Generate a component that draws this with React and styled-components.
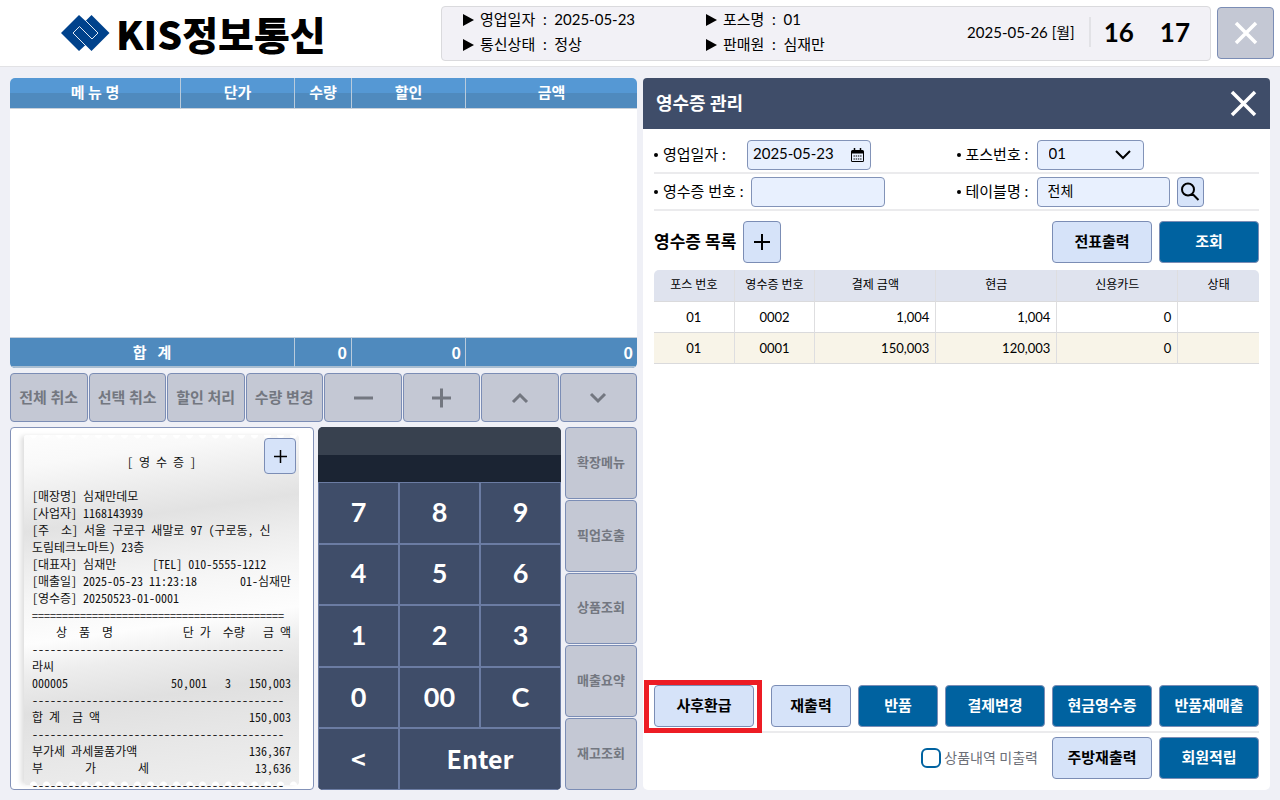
import React, { useState } from 'react';
import styled, { css, createGlobalStyle } from 'styled-components';

const GlobalStyle = createGlobalStyle`
  * {
    box-sizing: border-box;
  }
  body {
    margin: 0;
    background: #eff0f6;
    color: #000;
    font-family: Lato, 'Noto Sans CJK KR', sans-serif;
    font-size: 14px;
  }
  button, input, select {
    font-family: inherit;
    margin: 0;
  }
`;

const Page = styled.div`
  display: flex;
  flex-direction: column;
  height: 100vh;
  min-height: 790px;
`;

/* header */

const Header = styled.header`
  display: flex;
  align-items: center;
  height: 67px;
  padding: 0 6px 0 60px;
  background: #fff;
  border-bottom: 1px solid #e2e2e5;
`;

const Logo = styled.h1`
  display: flex;
  align-items: center;
  flex: 1;
  gap: 6px;
  margin: 0;
  padding-bottom: 1px;
  font-family: 'Noto Sans CJK KR', sans-serif;
  font-size: 39px;
  font-weight: 900;
  line-height: 50px;
  white-space: nowrap;
`;

const StatusBox = styled.div`
  display: flex;
  align-items: center;
  width: 770px;
  height: 55px;
  margin-right: 6px;
  padding: 0 20px 2px 21px;
  background: #f2f1f6;
  border: 1px solid #dadadd;
  border-radius: 4px;
`;

const StatusList = styled.ul`
  display: grid;
  grid-template-columns: 243px 1fr;
  flex: 1;
  margin: 0;
  padding: 0;
  list-style: none;
  line-height: 25px;
`;

const StatusItem = styled.li`
  display: flex;
  align-items: center;
  gap: 6px;
  font-size: 15px;
  white-space: pre;
`;

const Today = styled.span`
  padding-right: 14px;
  border-right: 2px solid #e2e2e6;
  font-size: 15px;
  line-height: 30px;
`;

const Clock = styled.span`
  display: flex;
  gap: 26px;
  padding-left: 13px;
  font-size: 26px;
  font-weight: 700;
`;

const buttonColors = {
  gray: css`
    background: #c4c8d4;
    color: #737780;
  `,
  light: css`
    background: #d6e3f9;
    color: #000;
  `,
  blue: css`
    background: #0062a0;
    color: #fff;
  `,
};

const Button = styled.button`
  position: relative;
  display: flex;
  align-items: center;
  justify-content: center;
  flex-shrink: 0;
  width: ${props => props.$width || 'auto'};
  height: ${props => props.$height || 'auto'};
  padding: 0 0 ${props => (props.$icon ? '0' : '3px')};
  border: 1px solid #7b8db5;
  border-radius: 4px;
  font-size: ${props => props.$size || '15px'};
  font-weight: 700;
  cursor: pointer;
  ${props => buttonColors[props.$color || 'gray']}
`;

/* layout */

const Main = styled.main`
  display: grid;
  grid-template-columns: repeat(2, minmax(0, 1fr));
  grid-template-rows: minmax(0, 1fr);
  flex: 1;
  gap: 6px;
  min-height: 0;
  padding: 11px 10px 10px;
`;

const OrderSide = styled.section`
  display: flex;
  flex-direction: column;
  gap: 5px;
  min-height: 0;
`;

const OrderTable = styled.table`
  width: 100%;
  height: 290px;
  table-layout: fixed;
  border-collapse: separate;
  border-spacing: 0;
  background: #fff;
  border-radius: 5px;
  overflow: hidden;
  color: #fff;
  font-size: 15px;
  font-weight: 700;

  th, tfoot td {
    height: 31px;
    padding: 0 0 3px;
    border-right: 1px solid #b9cbdc;
  }
  th:last-child, tfoot td:last-child {
    border-right: 0;
  }
  thead th {
    background: linear-gradient(#5598d4 50%, #4f8abe 50%);
    border-bottom: 1px solid #c8d0da;
  }
  tfoot th, tfoot td {
    padding-bottom: 1px;
    background: #4f8abe;
    border-top: 1px solid #c8d0da;
    border-bottom: 2px solid #a9bed2;
  }
  tfoot th {
    white-space: pre;
  }
  tfoot td {
    padding-right: 4px;
    font-family: 'Noto Sans CJK KR', sans-serif;
    font-size: 16px;
    line-height: 20px;
    text-align: right;
  }
`;

const Tools = styled.div`
  display: grid;
  grid-template-columns: repeat(8, 1fr);
  gap: 1px;
  height: 49px;
`;

const Bottom = styled.div`
  display: grid;
  grid-template-columns: 304fr 243fr 72fr;
  grid-template-rows: minmax(0, 1fr);
  flex: 1;
  gap: 4px;
  min-height: 0;
`;

/* receipt */

const ReceiptBox = styled.div`
  position: relative;
  padding: 7px 14px 4px 13px;
  background: #fff;
  border: 1px solid #8392b8;
  border-radius: 4px;
`;

const Paper = styled.div`
  height: 100%;
  padding: 18px 8px 0;
  border-radius: 3px;
  background:
    radial-gradient(circle at 50% 0, #fff 3px, transparent 4px) 3px 0 / 13px 5px repeat-x,
    radial-gradient(circle at 50% 100%, #fff 3px, transparent 4px) 3px 100% / 13px 5px repeat-x,
    linear-gradient(172deg, #fdfdfd 0, #f9f9f9 8%, #e2e2e2 25%, #ededed 34%, #f6f6f6 43%, #fdfdfd 54%, #ededed 62%, #e0e0e0 72%, #e6e6e6 82%, #efefef 100%);
  box-shadow: -4px 0 5px -1px #dedede;
  font-family: 'Noto Sans Mono CJK KR', 'Liberation Mono', 'Noto Sans CJK KR', monospace;
  font-size: 12px;
  line-height: 17px;
  color: #111;
`;

const ReceiptTitle = styled.h2`
  margin: 0 0 17px;
  font-size: 12px;
  font-weight: 400;
  text-align: center;
`;

const Line = styled.div`
  display: flex;
  justify-content: space-between;
  height: 17px;
  white-space: pre;
`;

const ReceiptPlus = styled(Button)`
  position: absolute;
  top: 10px;
  right: 17px;
`;

/* keypad */

const Keypad = styled.div`
  display: flex;
  flex-direction: column;
  border-radius: 5px;
  overflow: hidden;
  background: #3f4d69;
`;

const Display = styled.output`
  display: block;
  height: 55px;
  background: linear-gradient(#38414f 50%, #1b2433 50%);
  color: #fff;
  font-size: 26px;
  line-height: 55px;
  text-align: right;
`;

const Keys = styled.div`
  display: grid;
  grid-template-columns: repeat(3, 1fr);
  grid-auto-rows: 1fr;
  flex: 1;
`;

const Key = styled.button`
  grid-column: span ${props => props.$span || 1};
  padding: 0 0 3px;
  background: #3f4d69;
  border: 1px solid #6b7ca3;
  color: #fff;
  font-size: 27px;
  font-weight: 700;
  cursor: pointer;
  ${props =>
    props.$word &&
    css`
      font-family: 'Noto Sans CJK KR', sans-serif;
      font-size: 25px;
    `}
`;

const SideMenu = styled.div`
  display: grid;
  grid-auto-rows: 1fr;
  gap: 1px;
`;

/* receipt management */

const Panel = styled.section`
  display: flex;
  flex-direction: column;
  background: #fff;
  border-radius: 5px;
`;

const PanelTitle = styled.div`
  display: flex;
  align-items: center;
  justify-content: space-between;
  height: 51px;
  padding: 0 13px;
  background: #3f4d69;
  border-radius: 4px 4px 0 0;
  color: #fff;

  h2 {
    margin: 0;
    padding-bottom: 3px;
    font-size: 18px;
  }
`;

const CloseButton = styled.button`
  display: flex;
  padding: 0;
  border: 0;
  background: none;
  color: #fff;
  cursor: pointer;
`;

const PanelBody = styled.div`
  display: flex;
  flex-direction: column;
  flex: 1;
  padding: 8px 11px 11px;
`;

const FilterRow = styled.div`
  display: grid;
  grid-template-columns: 1fr 1fr;
  height: 37px;
  border-bottom: 2px solid #ebebed;
`;

const Field = styled.div`
  display: flex;
  align-items: center;
`;

const Label = styled.label`
  display: flex;
  align-items: center;
  gap: 5px;
  width: ${props => props.$width};
  padding-bottom: 2px;
  white-space: pre;
  font-size: 15px;

  &::before {
    content: '';
    width: 4px;
    height: 4px;
    margin-top: 3px;
    border-radius: 50%;
    background: #000;
  }
`;

const InputWrap = styled.span`
  position: relative;
  display: flex;
  width: ${props => props.$width};

  svg {
    position: absolute;
    top: 8px;
    right: ${props => props.$iconRight || '7px'};
    pointer-events: none;
  }
`;

const fieldStyle = css`
  width: 100%;
  height: 30px;
  padding: 0 ${props => props.$pad || '5px'} 3px;
  background: #e8f0fe;
  border: 1px solid #8293b8;
  border-radius: 4px;
  color: #000;
  font-size: ${props => props.$size || '15px'};
`;

const Input = styled.input`
  ${fieldStyle}
`;

const Select = styled.select`
  ${fieldStyle}
  appearance: none;
`;

const SearchButton = styled(Button)`
  margin-left: 7px;
`;

const ListHead = styled.div`
  display: flex;
  align-items: center;
  gap: 7px;
  margin: 10px 0 7px;

  h3 {
    margin: 0;
    padding-bottom: 3px;
    font-size: 17px;
  }
`;

const Spacer = styled.span`
  flex: 1;
`;

const ListTable = styled.table`
  width: 100%;
  table-layout: fixed;
  border-collapse: separate;
  border-spacing: 0;
  font-size: 13px;

  th, td {
    height: 31px;
    padding: 0 6px 1px;
    border-right: 1px solid #dedee0;
    border-bottom: 1px solid #dadadc;
    text-align: center;
  }
  th {
    height: 32px;
    padding-bottom: 4px;
    background: #dfe3ee;
    font-size: 12px;
    font-weight: 400;
  }
  th:first-child {
    border-radius: 5px 0 0 0;
  }
  th:last-child {
    border-radius: 0 5px 0 0;
  }
  th:last-child, td:last-child {
    border-right: 0;
  }
  tbody tr:nth-child(even) td {
    background: #f8f4e8;
  }
  td:nth-child(n + 3) {
    text-align: right;
  }
`;

const Actions = styled.div`
  display: flex;
  align-items: center;
  gap: 7px;
  margin-top: auto;
  padding-bottom: 4px;
  border-bottom: 2px solid #ebebed;
`;

const Footer = styled.div`
  display: flex;
  align-items: center;
  justify-content: flex-end;
  gap: 7px;
  padding-top: 4px;
`;

const Marked = styled.span`
  position: relative;
  margin-right: auto;

  &::after {
    content: '';
    position: absolute;
    inset: -5px -8px -6px -10px;
    border: 5px solid #ed1c24;
    pointer-events: none;
  }
`;

const CheckLabel = styled.label`
  display: flex;
  align-items: center;
  gap: 3px;
  margin-right: 7px;
  color: #6d7078;
  font-size: 14px;

  span {
    padding-bottom: 3px;
  }
  input {
    width: 20px;
    height: 20px;
    appearance: none;
    background: #fff;
    border: 2px solid #0062a0;
    border-radius: 6px;
  }
  input:checked {
    background: #0062a0;
  }
`;

const Stroke = ({ d, width, height = width, weight = 2 }) => (
  <svg width={width} height={height} viewBox={`0 0 ${width} ${height}`} fill="none" stroke="currentColor" strokeWidth={weight} aria-hidden="true">
    <path d={d} />
  </svg>
);

const LogoMark = () => (
  <svg width="50" height="38" viewBox="0 0 50 38" aria-hidden="true">
    <path d="M1 19L19 1l6.500 6L31.500 1 49.500 19l-18 18-6-6-6.500 6z" fill="#00428c" />
    <path d="M25.500 31.500L13 19l6.500-6.500L32 25l6-6L25.500 6.500" fill="none" stroke="#e3ebf4" strokeWidth="1" />
  </svg>
);

const Triangle = () => (
  <svg width="11" height="12" viewBox="0 0 11 12" aria-hidden="true">
    <path d="M0 0l11 6-11 6z" />
  </svg>
);

const CalendarIcon = () => (
  <svg width="13" height="14" viewBox="0 0 13 14" aria-hidden="true">
    <path d="M1.500 2h10A1.500 1.500 0 0113 3.500v9a1.500 1.500 0 01-1.500 1.500h-10A1.500 1.500 0 010 12.500v-9A1.500 1.500 0 011.500 2zM1 5.500v7.500h11V5.500z" fillRule="evenodd" />
    <path d="M3.500 0v3M9.500 0v3" stroke="#000" strokeWidth="1.500" />
    <path d="M2.500 8h8M2.500 11h8" stroke="#000" strokeWidth="1.200" strokeDasharray="1.400 0.800" />
  </svg>
);

const toolButtons = [
  { label: '전체 취소' },
  { label: '선택 취소' },
  { label: '할인 처리' },
  { label: '수량 변경' },
  { name: '빼기', d: 'M3 12h19' },
  { name: '더하기', d: 'M3 12h19M12.500 2.500v19' },
  { name: '위로', d: 'M5 16l7-7 7 7' },
  { name: '아래로', d: 'M5 8l7 7 7-7' },
];

const keys = ['7', '8', '9', '4', '5', '6', '1', '2', '3', '0', '00', 'C', '<', 'Enter'];
const sideMenu = ['확장메뉴', '픽업호출', '상품조회', '매출요약', '재고조회'];

const DASH = '-'.repeat(42);

const receiptLines = [
  ['[매장명] 심재만데모'],
  ['[사업자] 1168143939'],
  ['[주  소] 서울 구로구 새말로 97 (구로동, 신'],
  ['도림테크노마트) 23층'],
  ['[대표자] 심재만      [TEL] 010-5555-1212'],
  ['[매출일] 2025-05-23 11:23:18', '01-심재만'],
  ['[영수증] 20250523-01-0001'],
  ['='.repeat(42)],
  ['    상  품  명', '단 가  수량   금 액'],
  [DASH],
  ['라씨'],
  ['000005', '50,001   3   150,003'],
  [DASH],
  ['합 계  금 액', '150,003'],
  [DASH],
  ['부가세 과세물품가액', '136,367'],
  ['부       가       세', '13,636'],
  [DASH],
];

const receipts = [
  ['01', '0002', '1,004', '1,004', '0', ''],
  ['01', '0001', '150,003', '120,003', '0', ''],
];

const actions = [
  { label: '재출력', color: 'light', width: '80px' },
  { label: '반품', color: 'blue', width: '80px' },
  { label: '결제변경', color: 'blue', width: '100px' },
  { label: '현금영수증', color: 'blue', width: '100px' },
  { label: '반품재매출', color: 'blue', width: '100px' },
];

function TopBar() {
  return (
    <Header>
      <Logo><LogoMark />KIS정보통신</Logo>
      <StatusBox>
        <StatusList>
          <StatusItem><Triangle />영업일자  :  2025-05-23</StatusItem>
          <StatusItem><Triangle />포스명  :  01</StatusItem>
          <StatusItem><Triangle />통신상태  :  정상</StatusItem>
          <StatusItem><Triangle />판매원  :  심재만</StatusItem>
        </StatusList>
        <Today>2025-05-26 [월]</Today>
        <Clock><span>16</span><span>17</span></Clock>
      </StatusBox>
      <Button $icon $width="57px" $height="52px" aria-label="종료">
        <svg width="24" height="24" viewBox="0 0 24 24" stroke="#fff" strokeWidth="3.500" aria-hidden="true">
          <path d="M2 2l20 20M22 2L2 22" />
        </svg>
      </Button>
    </Header>
  );
}

function Order() {
  const [entry, setEntry] = useState('');

  const press = (key) => {
    if (key === 'C' || key === 'Enter') {
      setEntry('');
    } else if (key === '<') {
      setEntry(entry.slice(0, -1));
    } else {
      setEntry(entry + key);
    }
  };

  return (
    <OrderSide>
      <OrderTable>
        <colgroup>
          <col style={{ width: `${300 / 11}%` }} />
          <col style={{ width: `${200 / 11}%` }} />
          <col style={{ width: `${100 / 11}%` }} />
          <col style={{ width: `${200 / 11}%` }} />
          <col style={{ width: `${300 / 11}%` }} />
        </colgroup>
        <thead>
          <tr><th>메 뉴 명</th><th>단가</th><th>수량</th><th>할인</th><th>금액</th></tr>
        </thead>
        <tbody>
          <tr><td colSpan={5} /></tr>
        </tbody>
        <tfoot>
          <tr><th colSpan={2}>합   계</th><td>0</td><td>0</td><td>0</td></tr>
        </tfoot>
      </OrderTable>
      <Tools>
        {toolButtons.map(tool => (
          <Button key={tool.label || tool.name} $icon={!tool.label} aria-label={tool.name}>
            {tool.label || <Stroke d={tool.d} width={24} weight={3} />}
          </Button>
        ))}
      </Tools>
      <Bottom>
        <ReceiptBox>
          <Paper>
            <ReceiptTitle>[ 영 수 증 ]</ReceiptTitle>
            {receiptLines.map((parts, i) => (
              <Line key={i}>{parts.map(part => <span key={part}>{part}</span>)}</Line>
            ))}
          </Paper>
          <ReceiptPlus $icon $color="light" $width="32px" $height="36px" aria-label="영수증 확대">
            <Stroke d="M0 6.500h13M6.500 0v13" width={13} weight={1.5} />
          </ReceiptPlus>
        </ReceiptBox>
        <Keypad>
          <Display>{entry}</Display>
          <Keys>
            {keys.map(key => (
              <Key key={key} $span={key === 'Enter' ? 2 : 1} $word={key === 'Enter' || key === '<'} onClick={() => press(key)}>
                {key}
              </Key>
            ))}
          </Keys>
        </Keypad>
        <SideMenu>
          {sideMenu.map(name => <Button key={name} $size="13px">{name}</Button>)}
        </SideMenu>
      </Bottom>
    </OrderSide>
  );
}

function ReceiptPanel() {
  return (
    <Panel>
      <PanelTitle>
        <h2>영수증 관리</h2>
        <CloseButton aria-label="닫기">
          <Stroke d="M2 2l23 23M25 2L2 25" width={27} weight={3.5} />
        </CloseButton>
      </PanelTitle>
      <PanelBody>
        <FilterRow>
          <Field>
            <Label htmlFor="date" $width="93px">영업일자 :</Label>
            <InputWrap $width="124px">
              <Input id="date" defaultValue="2025-05-23" />
              <CalendarIcon />
            </InputWrap>
          </Field>
          <Field>
            <Label htmlFor="pos" $width="80px">포스번호 :</Label>
            <InputWrap $width="107px" $iconRight="13px">
              <Select id="pos" defaultValue="01" $pad="11px">
                <option>01</option>
                <option>02</option>
              </Select>
              <Stroke d="M1 3l7 7 7-7" width={16} height={14} />
            </InputWrap>
          </Field>
        </FilterRow>
        <FilterRow>
          <Field>
            <Label htmlFor="number" $width="97px">영수증 번호 :</Label>
            <InputWrap $width="134px"><Input id="number" /></InputWrap>
          </Field>
          <Field>
            <Label htmlFor="table" $width="80px">테이블명 :</Label>
            <InputWrap $width="133px"><Input id="table" defaultValue="전체" $pad="10px" $size="14px" /></InputWrap>
            <SearchButton $icon $color="light" $width="27px" $height="30px" aria-label="검색">
              <Stroke d="M8 1.500a6 6 0 100 12 6 6 0 000-12M12.300 11.800l6.200 6.200" width={20} />
            </SearchButton>
          </Field>
        </FilterRow>
        <ListHead>
          <h3>영수증 목록</h3>
          <Button $icon $color="light" $width="38px" $height="42px" aria-label="추가">
            <Stroke d="M0 8h16M8 0v16" width={16} />
          </Button>
          <Spacer />
          <Button $color="light" $width="100px" $height="42px">전표출력</Button>
          <Button $color="blue" $width="100px" $height="42px">조회</Button>
        </ListHead>
        <ListTable>
          <colgroup>
            {[2, 2, 3, 3, 3, 2].map((part, i) => <col key={i} style={{ width: `${part * 100 / 15}%` }} />)}
          </colgroup>
          <thead>
            <tr>
              <th>포스 번호</th>
              <th>영수증 번호</th>
              <th>결제 금액</th>
              <th>현금</th>
              <th>신용카드</th>
              <th>상태</th>
            </tr>
          </thead>
          <tbody>
            {receipts.map(row => (
              <tr key={row[1]}>{row.map((cell, i) => <td key={i}>{cell}</td>)}</tr>
            ))}
          </tbody>
        </ListTable>
        <Actions>
          <Marked>
            <Button $color="light" $width="100px" $height="42px">사후환급</Button>
          </Marked>
          {actions.map(({ label, color, width }) => (
            <Button key={label} $color={color} $width={width} $height="42px">{label}</Button>
          ))}
        </Actions>
        <Footer>
          <CheckLabel><input type="checkbox" /><span>상품내역 미출력</span></CheckLabel>
          <Button $color="light" $width="100px" $height="42px">주방재출력</Button>
          <Button $color="blue" $width="100px" $height="42px">회원적립</Button>
        </Footer>
      </PanelBody>
    </Panel>
  );
}

function App() {
  return (
    <Page>
      <GlobalStyle />
      <TopBar />
      <Main>
        <Order />
        <ReceiptPanel />
      </Main>
    </Page>
  );
}

export default App;
